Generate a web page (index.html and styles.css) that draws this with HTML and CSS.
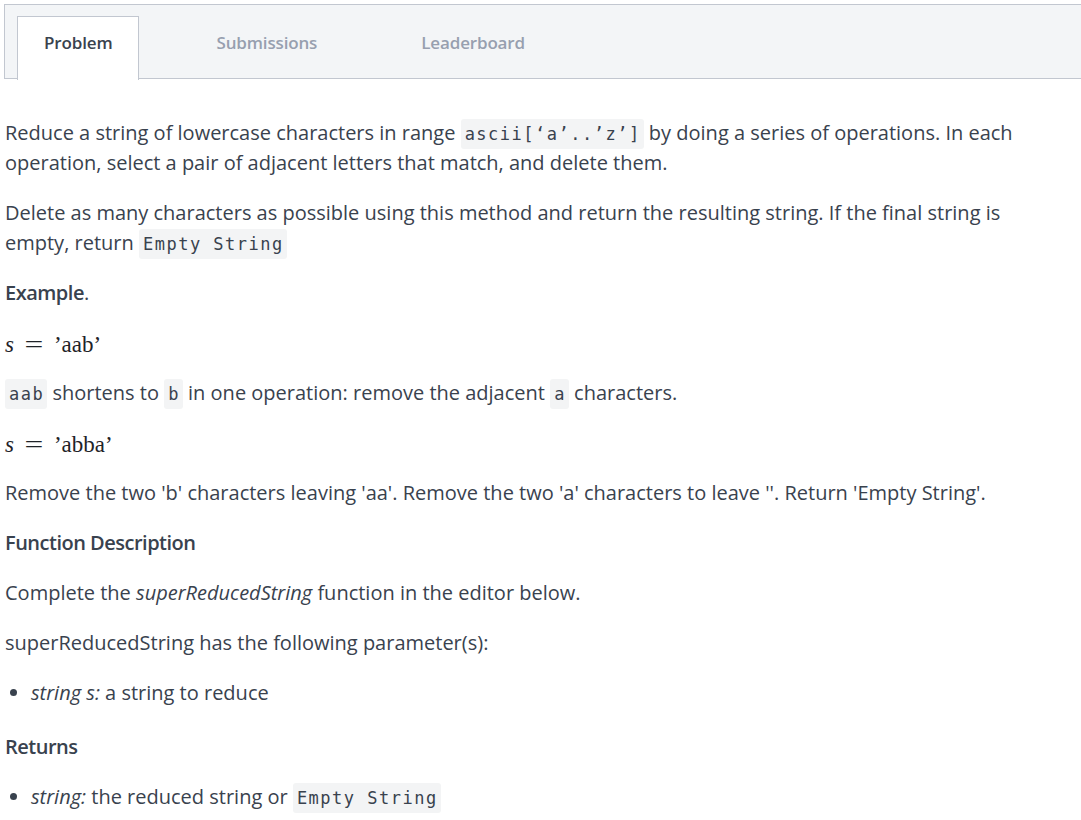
FILE: index.html
```html
<!DOCTYPE html>
<html>
<head>
<meta charset="utf-8">
<link rel="stylesheet" href="styles.css">
</head>
<body>
<div class="page">
  <div class="tabs">
    <div class="tab active">Problem</div>
    <div class="tab">Submissions</div>
    <div class="tab">Leaderboard</div>
  </div>
  <div class="content">
    <p>Reduce a string of lowercase characters in range <code>ascii[‘a’..’z’]</code> by doing a series of operations. In each operation, select a pair of adjacent letters that match, and delete them.</p>
    <p>Delete as many characters as possible using this method and return the resulting string. If the final string is empty, return <code>Empty String</code></p>
    <p class="head">Example<span class="dot">.</span></p>
    <p class="math"><i>s</i><span class="eq">=</span>’aab’</p>
    <p><code>aab</code> shortens to <code>b</code> in one operation: remove the adjacent <code>a</code> characters.</p>
    <p class="math"><i>s</i><span class="eq">=</span>’abba’</p>
    <p>Remove the two 'b' characters leaving 'aa'. Remove the two 'a' characters to leave ''. Return 'Empty String'.</p>
    <p class="head">Function Description</p>
    <p>Complete the <em>superReducedString</em> function in the editor below.</p>
    <p>superReducedString has the following parameter(s):</p>
    <ul>
      <li><em>string s:</em> a string to reduce</li>
    </ul>
    <p class="head ret">Returns</p>
    <ul>
      <li><em>string:</em> the reduced string or <code>Empty String</code></li>
    </ul>
  </div>
</div>
</body>
</html>
```
FILE: styles.css
```css
html, body {
  margin: 0;
  padding: 0;
  background: #ffffff;
  overflow: hidden;
}
body {
  font-family: "Open Sans", "Liberation Sans", sans-serif;
  color: #39424e;
}
.page {
  padding: 4px 0 0 4px;
}
.tabs {
  display: flex;
  gap: 50px;
  height: 75px;
  box-sizing: border-box;
  background: #f3f5f7;
  border: 1px solid #c2c7d0;
  border-right: none;
  padding: 11px 0 0 12px;
  margin-right: -10px;
}
.tab {
  padding: 15px 26px 0 26px;
  font-size: 17px;
  font-weight: 600;
  color: #979faf;
  height: 64px;
  box-sizing: border-box;
  line-height: 22px;
  border: 1px solid transparent;
  border-bottom: none;
  letter-spacing: -0.15px;
}
.tab.active {
  background: #ffffff;
  color: #39424e;
  border-color: #c2c7d0;
}
.content {
  padding: 39px 0 0 1px;
  max-width: 1030px;
  font-size: 20px;
  line-height: 30px;
}
p {
  margin: 0 0 20px 0;
}
code {
  font-family: "DejaVu Sans Mono", monospace;
  font-size: 17px;
  line-height: 20px;
  letter-spacing: 1.5px;
  background: #f3f4f5;
  padding: 5px 3px 5px 4px;
  border-radius: 3px;
  color: #39424e;
}
.head {
  font-weight: 600;
  letter-spacing: -0.5px;
}
.head .dot {
  font-weight: 400;
}
.math {
  font-family: "Liberation Serif", "DejaVu Serif", serif;
  font-size: 23px;
  line-height: 20px;
  height: 30px;
  box-sizing: border-box;
  padding-top: 3px;
  display: flex;
  align-items: center;
  color: #1f2328;
}
.math .eq {
  display: inline-block;
  width: 18px;
  text-align: center;
  transform: scaleX(1.45);
  margin: 0 11px 0 11px;
}
em {
  font-style: italic;
}
ul {
  margin: 0 0 20px 0;
  padding-left: 26px;
}
.ret {
  margin-top: 24px;
}
```
